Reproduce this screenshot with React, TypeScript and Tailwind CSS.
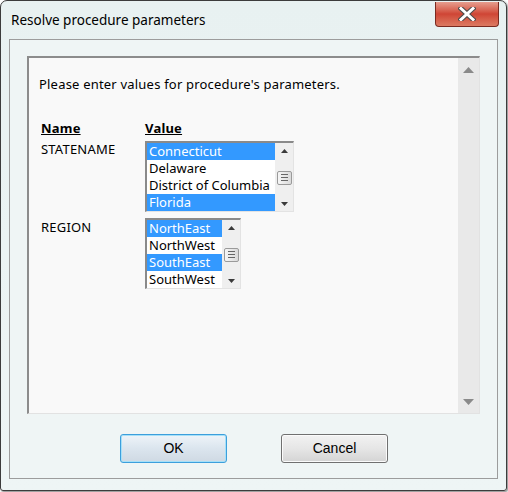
import { FC } from 'react'

const UpArrow: FC = () => (
	<svg width="7" height="4" viewBox="0 0 7 4" className="block">
		<path d="M0 4 L3.5 0 L7 4 Z" fill="#3a3a3a" />
	</svg>
)

const DownArrow: FC = () => (
	<svg width="7" height="4" viewBox="0 0 7 4" className="block">
		<path d="M0 0 L3.5 4 L7 0 Z" fill="#3a3a3a" />
	</svg>
)

const Thumb: FC = () => (
	<div className="w-[15px] h-[14px] rounded-[2px] border border-[#9a9a9a] bg-gradient-to-r from-[#f6f6f6] to-[#dadada] flex flex-col items-center justify-center gap-[2px]">
		<div className="w-[7px] h-px bg-[#666]" />
		<div className="w-[7px] h-px bg-[#666]" />
		<div className="w-[7px] h-px bg-[#666]" />
	</div>
)

type Item = { label: string; selected: boolean }

const ListBox: FC<{ items: Item[]; width: string }> = ({ items, width }) => (
	<div
		className={`${width} flex border-t-2 border-l-2 border-[#8a8a8a] border-r border-b border-r-[#e3e3e3] border-b-[#e3e3e3] bg-white tracking-normal`}
	>
		<div className="flex-1 flex flex-col min-w-0">
			{items.map((it) => (
				<div
					key={it.label}
					className={`h-[17px] leading-[17px] pl-[2px] whitespace-nowrap overflow-hidden ${
						it.selected ? 'bg-[#3399ff] text-white' : 'text-black'
					}`}
				>
					{it.label}
				</div>
			))}
		</div>
		<div className="w-[18px] shrink-0 bg-[#efefef] flex flex-col items-center justify-between pt-[6px] pb-[5px]">
			<UpArrow />
			<Thumb />
			<DownArrow />
		</div>
	</div>
)

const App: FC = () => {
	const states: Item[] = [
		{ label: 'Connecticut', selected: true },
		{ label: 'Delaware', selected: false },
		{ label: 'District of Columbia', selected: false },
		{ label: 'Florida', selected: true },
	]
	const regions: Item[] = [
		{ label: 'NorthEast', selected: true },
		{ label: 'NorthWest', selected: false },
		{ label: 'SouthEast', selected: true },
		{ label: 'SouthWest', selected: false },
	]

	return (
		<div className="w-[508px] h-[492px] bg-white font-['Noto_Sans',sans-serif]">
			<div className="w-[507px] h-[491px] rounded-t-[7px] rounded-b-[3px] border border-[#3c3c3c] bg-gradient-to-b from-[#e8f1f1] to-[#eef5f5] flex flex-col px-[8px] pb-[11px] shadow-[1px_1px_2px_rgba(0,0,0,0.5)]">
				{/* title bar */}
				<div className="h-[38px] flex items-start justify-between">
					<div className="pl-[2px] pt-[10px] text-[13.5px] leading-[19px] text-black">
						Resolve procedure parameters
					</div>
					<div className="w-[64px] h-[25px] -mr-[1px] mt-px rounded-b-[4px] border border-[#7a2a20] border-t-0 bg-gradient-to-b from-[#e59d8e] via-[#cf4535] to-[#dc7a62] flex items-center justify-center">
						<svg width="18" height="14" viewBox="0 0 18 14">
							<path
								d="M3 1.5 L15 12.5 M15 1.5 L3 12.5"
								stroke="#4a4a4a"
								strokeWidth="5"
								strokeLinecap="square"
							/>
							<path
								d="M3 1.5 L15 12.5 M15 1.5 L3 12.5"
								stroke="#ffffff"
								strokeWidth="3"
								strokeLinecap="square"
							/>
						</svg>
					</div>
				</div>

				{/* client area */}
				<div className="flex-1 border border-[#9c9c9c] bg-[#eff5f5] flex flex-col px-[17px] pt-[16px] pb-[15px]">
					<div className="h-[358px] flex border-t-2 border-l-2 border-[#8c8c8c] border-r border-b border-r-[#e2e2e2] border-b-[#e2e2e2] bg-[#f9f9f9]">
						<div className="flex-1 flex flex-col pl-[10px] pt-[17px] text-[13px] tracking-[0.2px] text-black">
							<div className="leading-[18px]">
								Please enter values for procedure's parameters.
							</div>
							<div className="mt-[27px] flex">
								<div className="w-[106px] pl-[2px] font-bold underline leading-[17px]">
									Name
								</div>
								<div className="font-bold underline leading-[17px]">Value</div>
							</div>
							<div className="flex mt-[4px]">
								<div className="w-[106px] pl-[2px] leading-[17px]">
									STATENAME
								</div>
								<ListBox items={states} width="w-[149px]" />
							</div>
							<div className="flex mt-[6px]">
								<div className="w-[106px] pl-[2px] pt-px leading-[17px]">
									REGION
								</div>
								<ListBox items={regions} width="w-[96px]" />
							</div>
						</div>
						<div className="w-[21px] bg-[#e9e9e9] flex flex-col items-center justify-between pt-[9px] pb-[8px]">
							<svg width="11" height="6" viewBox="0 0 11 6">
								<path d="M0 6 L5.5 0 L11 6 Z" fill="#8a8a8a" />
							</svg>
							<svg width="11" height="6" viewBox="0 0 11 6">
								<path d="M0 0 L5.5 6 L11 0 Z" fill="#8a8a8a" />
							</svg>
						</div>
					</div>

					<div className="mt-[20px] flex pl-[93px] gap-[54px] font-['Liberation_Sans',sans-serif] text-[14px] text-black">
						<button className="w-[107px] h-[29px] rounded-[3px] border border-[#3c9fdc] bg-gradient-to-b from-[#eef4f9] via-[#dbe5ee] to-[#cfd9e3] shadow-[inset_0_0_0_1px_#a6e0f8]">
							OK
						</button>
						<button className="w-[107px] h-[29px] rounded-[3px] border border-[#707070] bg-gradient-to-b from-[#f2f2f2] via-[#e6e6e6] to-[#d4d4d4] shadow-[inset_0_0_0_1px_#fbfbfb]">
							Cancel
						</button>
					</div>
				</div>
			</div>
		</div>
	)
}

export default App
